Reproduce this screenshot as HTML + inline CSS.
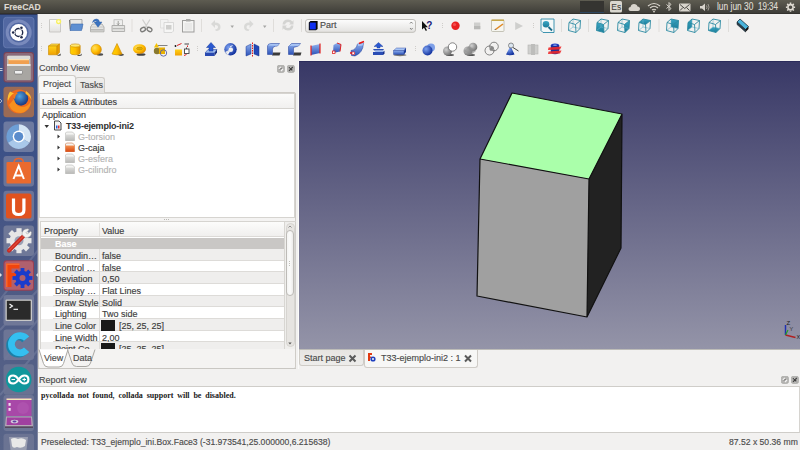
<!DOCTYPE html>
<html><head><meta charset="utf-8">
<style>
*{box-sizing:border-box;margin:0;padding:0}
html,body{width:800px;height:450px;overflow:hidden;background:#f2f1f0;font-family:"Liberation Sans",sans-serif;position:relative}
.a{position:absolute}
.t{position:absolute;white-space:nowrap;color:#3c3c3c;font-size:9px;line-height:11px;-webkit-text-stroke:0.15px currentColor}
#panel{left:0;top:0;width:800px;height:14px;background:linear-gradient(#5e5c51,#3f3e39 92%,#33322e 93%);}
#launcher{left:0;top:14px;width:38px;height:436px;background:linear-gradient(#3a548e,#3d5186 35%,#4e5a84 60%,#586488);border-right:1px solid #6a7090}
#vp{left:299px;top:61px;width:501px;height:288px;background:linear-gradient(#383866,#9494a8);border-top:1px solid #2a2a5a}
.dbtn{position:absolute;width:7px;height:7px;border-radius:2px;background:#aaa9a7;border:1px solid #9a9997}
</style></head><body>
<div id="panel" class="a">
  <div class="t" style="left:4px;top:1px;font-size:8.6px;line-height:12px;font-weight:bold;color:#dfdbd2">FreeCAD</div>
  <div class="t" style="left:717px;top:1px;font-size:10px;line-height:12px;color:#dfdbd2;transform:scaleX(0.84);transform-origin:0 0">lun jun 30</div>
  <div class="t" style="left:758px;top:1px;font-size:10px;line-height:12px;color:#dfdbd2;transform:scaleX(0.8);transform-origin:0 0">19:34</div>
</div>
<svg class="a" style="left:0;top:0" width="800" height="14" viewBox="0 0 800 14">
 <rect x="580" y="1" width="24" height="12" fill="#353431"/>
 <rect x="580" y="12" width="24" height="1" fill="#2a5a90" opacity="0.5"/>
 <rect x="610" y="1" width="12" height="11.5" rx="1.5" fill="#dad7cf"/>
 <text x="611.3" y="10" font-family="Liberation Sans" font-size="8.5" fill="#3c3b37">Es</text>
 <path d="M630.5 11 Q628.5 11 628.5 9 Q628.5 7.2 630.5 7 Q631 4 634 4 Q637 4 637.5 6.5 Q640 6.5 640 9 Q640 11 638 11 Z" fill="#d8d4cc"/>
 <path d="M648 6 Q654 1 660 6" fill="none" stroke="#d8d4cc" stroke-width="1.2"/>
 <path d="M650 8 Q654 4.5 658 8" fill="none" stroke="#d8d4cc" stroke-width="1.2"/>
 <path d="M652 10 Q654 8.5 656 10" fill="none" stroke="#d8d4cc" stroke-width="1.2"/>
 <circle cx="654" cy="11.5" r="0.9" fill="#d8d4cc"/>
 <path d="M666.5 4.5 L671 8.5 L669 10.5 L669 2.5 L671 4.5 L666.5 8.5" fill="none" stroke="#d8d4cc" stroke-width="1"/>
 <rect x="679" y="3.5" width="11.5" height="8" rx="1" fill="#d8d4cc"/>
 <path d="M680 4.5 L684.7 8.5 L689.5 4.5 M680 10.5 L683 7.5 M689.5 10.5 L686.5 7.5" fill="none" stroke="#3d3c38" stroke-width="0.9"/>
 <path d="M700 6 H702 L705 3.5 V11 L702 8.5 H700 Z" fill="#d8d4cc"/>
 <path d="M706.5 5.5 Q707.5 7.2 706.5 9 M708 4 Q710 7.2 708 10.5" fill="none" stroke="#a8a49c" stroke-width="0.9"/>
 <g transform="translate(790.5 7.2)" fill="none" stroke="#dfdbd2">
  <circle r="2.6" stroke-width="1.6"/>
  <path d="M0 -4.6 V-3.2 M0 3.2 V4.6 M-4.6 0 H-3.2 M3.2 0 H4.6 M-3.3 -3.3 L-2.3 -2.3 M2.3 2.3 L3.3 3.3 M-3.3 3.3 L-2.3 2.3 M2.3 -2.3 L3.3 -3.3" stroke-width="1.6"/>
 </g>
</svg>
<div id="launcher" class="a"></div>
<svg class="a" style="left:0;top:14px" width="38" height="436" viewBox="0 14 38 436">
 <defs>
  <linearGradient id="tile" x1="0" y1="0" x2="0" y2="1"><stop offset="0" stop-color="#fff" stop-opacity="0.22"/><stop offset="1" stop-color="#fff" stop-opacity="0.08"/></linearGradient>
  <radialGradient id="ff" cx="0.4" cy="0.35" r="0.6"><stop offset="0" stop-color="#4fa3e0"/><stop offset="1" stop-color="#1d3f86"/></radialGradient>
 </defs>
 <!-- wallpaper streaks -->
 <path d="M0 300 L38 250 M0 330 L38 290 M4 360 L38 320 M0 395 L38 350" stroke="#8a93b0" stroke-width="2" opacity="0.35"/>
 <rect x="37" y="14" width="1" height="436" fill="#8d95ae" opacity="0.6"/>
 <!-- 1 ubuntu -->
 <rect x="0" y="14" width="37" height="1" fill="#2c3658"/>
 <rect x="3.5" y="17.3" width="30.5" height="30.5" rx="3" fill="#5268a2" stroke="#7488bc" stroke-width="0.6"/>
 <circle cx="18.7" cy="32.5" r="11.5" fill="none" stroke="#a8b4dc" stroke-width="3" opacity="0.45"/>
 <circle cx="18.7" cy="32.5" r="8.4" fill="#fff"/>
 <circle cx="18.7" cy="32.5" r="4" fill="none" stroke="#1e2848" stroke-width="1.4"/>
 <circle cx="21.45" cy="27.74" r="2.1" fill="#fff"/><circle cx="13.20" cy="32.50" r="2.1" fill="#fff"/><circle cx="21.45" cy="37.26" r="2.1" fill="#fff"/><circle cx="21.45" cy="27.74" r="1.3" fill="#1e2848"/><circle cx="13.20" cy="32.50" r="1.3" fill="#1e2848"/><circle cx="21.45" cy="37.26" r="1.3" fill="#1e2848"/>
 <!-- 2 files -->
 <rect x="3.5" y="52" width="30.5" height="30.5" rx="3" fill="#7c4456"/>
 <rect x="4.5" y="53" width="28.5" height="28.5" rx="2.5" fill="#8a6a7a"/>
 <rect x="7" y="55.5" width="23.5" height="24.5" rx="1.5" fill="#b9b7b3"/>
 <rect x="7.5" y="56" width="22.5" height="3" fill="#dcdad6"/>
 <rect x="8.5" y="59" width="20.5" height="5" fill="#f0a050"/>
 <rect x="8.5" y="59" width="20.5" height="1.2" fill="#fce0b0"/>
 <rect x="7" y="64" width="23.5" height="2" fill="#e8e6e2"/>
 <rect x="7" y="66" width="23.5" height="14" fill="#a8a6a2"/>
 <rect x="14.5" y="70.5" width="8" height="3.5" rx="1" fill="#f0f0f0" stroke="#6a6a6a" stroke-width="0.6"/>
 <path d="M0 68.5 H2.5 M0 70.5 H2.5" stroke="#e8e8e8" stroke-width="0.8"/>
 <!-- 3 firefox -->
 <rect x="3.5" y="86.7" width="30.5" height="30.5" rx="3" fill="#9b6b55"/>
 <circle cx="19" cy="101.5" r="12" fill="#ee6a1e"/>
 <circle cx="21" cy="98.5" r="7.2" fill="url(#ff)"/>
 <path d="M10 91.5 Q7 96 8 101 Q10 95 14 93.5Z" fill="#ffc030"/>
 <path d="M14 99 Q15 106 22 107 Q28 107 31 101 Q30 111 21 113 Q12 113 9 105Z" fill="#f7901e"/>
 <path d="M26 91 Q31 94 31.5 100 Q29 95 25.5 94Z" fill="#ffb830"/>
 <path d="M13 95 Q15 92 18 93 Q15 95 15 99 Q13 98 13 95Z" fill="#f07a1e"/>
 <path d="M0 99 L2 101 L0 103" fill="none" stroke="#ddd" stroke-width="0.7"/>
 <!-- 4 chromium -->
 <rect x="3.5" y="121.4" width="30.5" height="30.5" rx="3" fill="#6d7aa0"/>
 <path d="M18.7 136.6 L18.70 124.30 A12.3 12.3 0 0 1 29.35 142.75Z" fill="#d4e4f4"/><path d="M18.7 136.6 L8.05 142.75 A12.3 12.3 0 0 1 18.70 124.30Z" fill="#6d9fd6"/><path d="M18.7 136.6 L29.35 142.75 A12.3 12.3 0 0 1 8.05 142.75Z" fill="#a9c8ea"/>
 <circle cx="18.7" cy="136.6" r="6" fill="#fff"/>
 <circle cx="18.7" cy="136.6" r="4.6" fill="#5a8ccc"/>
 <!-- 5 software center -->
 <rect x="3.5" y="156.1" width="30.5" height="30.5" rx="3" fill="#6b7498"/>
 <path d="M14 163 Q14 158.5 18.7 158.5 Q23.4 158.5 23.4 163" fill="none" stroke="#e8642c" stroke-width="1.6"/>
 <rect x="6.5" y="162" width="24.5" height="21.5" rx="1" fill="#ea6a2e"/>
 <path d="M13.5 179 L18.7 166 L23.9 179 M14.8 175.5 H22.6" fill="none" stroke="#fff" stroke-width="2"/>
 <!-- 6 ubuntu one -->
 <rect x="3.5" y="190.8" width="30.5" height="30.5" rx="3" fill="#6b7498"/>
 <rect x="6" y="193.5" width="25.5" height="25" rx="2.5" fill="#e0521e"/>
 <path d="M13.5 198.5 V210 Q13.5 214.5 18.7 214.5 Q23.9 214.5 23.9 210 V198.5" fill="none" stroke="#fff" stroke-width="3.2"/>
 <!-- 7 settings -->
 <rect x="3.5" y="225.5" width="30.5" height="30.5" rx="3" fill="#6f7898"/>
 <g transform="translate(19 240.7)">
  <circle r="9.5" fill="#e6e6e6"/>
  <g fill="#e6e6e6">
   <rect x="-2.6" y="-12.5" width="5.2" height="5"/><rect x="-2.6" y="7.5" width="5.2" height="5"/><rect x="-12.5" y="-2.6" width="5" height="5.2"/><rect x="7.5" y="-2.6" width="5" height="5.2"/>
   <g transform="rotate(45)"><rect x="-2.6" y="-12.5" width="5.2" height="5"/><rect x="-2.6" y="7.5" width="5.2" height="5"/><rect x="-12.5" y="-2.6" width="5" height="5.2"/><rect x="7.5" y="-2.6" width="5" height="5.2"/></g>
  </g>
  <circle r="4.5" fill="#9aa0b4"/>
  <path d="M-10 10 L5 -5" stroke="#c82a22" stroke-width="4" stroke-linecap="round"/>
  <path d="M-10 10 L5 -5" stroke="#f05a40" stroke-width="1.2" stroke-linecap="round" opacity="0.7"/>
  <path d="M3 -6 Q3 -12 9 -12 L10 -11 L7 -8 L8.5 -6.5 L11.5 -9.5 L12.5 -8.5 Q12.5 -3 6.5 -3Z" fill="#f2f2f2" stroke="#9a9a9a" stroke-width="0.5"/>
 </g>
 <!-- 8 freecad -->
 <rect x="3.5" y="260.2" width="30.5" height="30.5" rx="3" fill="#9a3f52"/>
 <rect x="4.5" y="261.2" width="28.5" height="28.5" rx="2.5" fill="#b0606e"/>
 <path d="M6 263.5 H19.5 V268.5 H11.5 V273 H18 V277.5 H11.5 V287 H6 Z" fill="#f0440e"/>
 <path d="M6 263.5 H19.5 V265 H7.5 V287 H6Z" fill="#ff8040" opacity="0.6"/>
 <g transform="translate(22.5 278)">
  <circle r="7.2" fill="#1a3ccc"/>
  <g fill="#1a3ccc">
   <rect x="-1.9" y="-10" width="3.8" height="4"/><rect x="-1.9" y="6" width="3.8" height="4"/><rect x="-10" y="-1.9" width="4" height="3.8"/><rect x="6" y="-1.9" width="4" height="3.8"/>
   <g transform="rotate(45)"><rect x="-1.9" y="-10" width="3.8" height="4"/><rect x="-1.9" y="6" width="3.8" height="4"/><rect x="-10" y="-1.9" width="4" height="3.8"/><rect x="6" y="-1.9" width="4" height="3.8"/></g>
  </g>
  <circle r="3" fill="#b0606e"/>
 </g>
 <path d="M0 273 L2 275 L0 277 M38 273 L36 275 L38 277" fill="#e0e0e0"/>
 <!-- 9 terminal -->
 <rect x="3.5" y="294.9" width="30.5" height="30.5" rx="3" fill="#707898"/>
 <rect x="5.5" y="299.5" width="26.5" height="21.5" rx="1" fill="#c8c8c8"/>
 <rect x="6.8" y="300.8" width="23.9" height="18.9" fill="#2a2a2a"/>
 <path d="M9.5 304 L12.5 306 L9.5 308" fill="none" stroke="#fff" stroke-width="1.1"/>
 <path d="M13.5 309.3 H18" stroke="#fff" stroke-width="1.1"/>
 <!-- 10 C -->
 <rect x="3.5" y="329.6" width="30.5" height="30.5" rx="3" fill="#707898" opacity="0.9"/>
 <path d="M27.39 337.79 A12 12 0 1 0 27.39 353.21 L22.18 348.84 A5.2 5.2 0 1 1 22.18 342.16Z" fill="#1c80a8"/>
 <path d="M29.19 336.49 A12 12 0 1 0 29.19 351.91 L23.98 347.54 A5.2 5.2 0 1 1 23.98 340.86Z" fill="#34bff0"/>
 <!-- 11 arduino -->
 <rect x="3.5" y="364.3" width="30.5" height="30.5" rx="3" fill="#6c7494" opacity="0.9"/>
 <circle cx="18.7" cy="379.5" r="12.8" fill="#10979c"/>
 <path d="M13.2 375.5 Q9 375.5 9 379.5 Q9 383.5 13.2 383.5 Q16 383.5 18.7 379.5 Q21.4 375.5 24.2 375.5 Q28.4 375.5 28.4 379.5 Q28.4 383.5 24.2 383.5 Q21.4 383.5 18.7 379.5 Q16 375.5 13.2 375.5Z" fill="none" stroke="#fff" stroke-width="2.2"/>
 <path d="M11.5 379.5 H15 M22.5 379.5 H26 M24.25 377.75 V381.25" stroke="#fff" stroke-width="1"/>
 <!-- 12 workspaces -->
 <rect x="3.5" y="395" width="30.5" height="36" rx="3" fill="#737a98" opacity="0.8"/>
 <rect x="6.5" y="398.5" width="25" height="17.5" fill="#a848a8"/>
 <rect x="6.5" y="398.5" width="25" height="1.5" fill="#f0e8b8"/>
 <circle cx="23" cy="408" r="6" fill="#c070c0" opacity="0.25"/>
 <rect x="8.5" y="403" width="2.2" height="2.8" fill="#f0e0f0"/><rect x="8.5" y="408" width="2.2" height="2.8" fill="#f0e0f0"/>
 <path d="M6 416.5 H32 L33 426.5 H5 Z" fill="#b8a8b8"/>
 <path d="M7 417.5 H31 L31.5 425 H6.5 Z" fill="#a040a0"/>
 <ellipse cx="14.5" cy="421.5" rx="3.8" ry="1.8" fill="#d8d0e0"/>
 <ellipse cx="14.5" cy="421.5" rx="2" ry="0.9" fill="#6040a0"/>
 <rect x="5" y="426.5" width="28" height="1.3" fill="#504050"/>
 <!-- 13 trash -->
 <rect x="3.5" y="433.7" width="30.5" height="20" rx="3" fill="#737a98" opacity="0.7"/>
 <path d="M9 437 H28 L26.5 450 H10.5Z" fill="#c8c8d0" opacity="0.5"/>
 <path d="M11 439 Q14 437 18 439 Q22 437 26 440 L25 446 Q21 449 17 447 Q13 449 12 446Z" fill="#e8e8e8"/>
</svg>
<!-- combo view header -->
<div class="t" style="left:39px;top:63px;color:#4c4c4c">Combo View</div>
<svg class="a" style="left:277px;top:65px" width="8" height="8" viewBox="0 0 8 8"><rect x="0.3" y="0.3" width="7.2" height="7.2" rx="1.8" fill="#b4b3b1" stroke="#a3a2a0" stroke-width="0.6"/><path d="M1.8 3.8 L3.8 1.8 M4 6 L6 4" stroke="#f4f4f4" stroke-width="1.1"/><path d="M3 4.6 L4.6 3" stroke="#555" stroke-width="0.9"/></svg>
<svg class="a" style="left:287px;top:65px" width="8" height="8" viewBox="0 0 8 8"><rect x="0.3" y="0.3" width="7.2" height="7.2" rx="1.8" fill="#b4b3b1" stroke="#a3a2a0" stroke-width="0.6"/><path d="M2 2 L5.8 5.8 M5.8 2 L2 5.8" stroke="#3e3e3e" stroke-width="1.1"/><path d="M2.2 1.4 L3.9 3.1 M6.4 4.7 L4.7 6.4" stroke="#eee" stroke-width="0.6"/></svg>
<!-- tabs -->
<div class="a" style="left:38px;top:92px;width:258px;height:277px;border:1px solid #cfccc7;border-radius:2px;background:#f4f3f2"></div>
<div class="a" style="left:75px;top:77px;width:30px;height:16px;border:1px solid #cfccc7;border-bottom:none;border-radius:3px 3px 0 0;background:linear-gradient(#efeeec,#e3e1de)"></div>
<div class="a" style="left:38px;top:75px;width:38px;height:18px;border:1px solid #cfccc7;border-bottom:none;border-radius:3px 3px 0 0;background:#f7f7f6"></div>
<div class="t" style="left:43px;top:79px;color:#4a4a4a">Project</div>
<div class="t" style="left:80px;top:80px;color:#4a4a4a">Tasks</div>
<!-- tree -->
<div class="a" style="left:39px;top:93px;width:256px;height:125px;background:#fff;border:1px solid #d6d4d0"></div>
<div class="a" style="left:40px;top:94px;width:254px;height:15px;background:linear-gradient(#fbfbfa,#f1f0ef);border-bottom:1px solid #d5d3cf"></div>
<div class="t" style="left:42px;top:97px">Labels &amp; Attributes</div>
<div class="t" style="left:42px;top:110px">Application</div>
<div class="t" style="left:66px;top:121px;font-weight:bold;color:#2e2e2e;letter-spacing:-0.2px;-webkit-text-stroke:0">T33-ejemplo-ini2</div>
<div class="t" style="left:78px;top:132px;color:#b4b4b4">G-torsion</div>
<div class="t" style="left:78px;top:143px;color:#3a3a3a">G-caja</div>
<div class="t" style="left:78px;top:154px;color:#b4b4b4">G-esfera</div>
<div class="t" style="left:78px;top:165px;color:#b4b4b4">G-cilindro</div>
<!-- splitter grip -->
<div class="a" style="left:164px;top:219px;width:6px;height:1px;background:repeating-linear-gradient(90deg,#b9b7b3 0 1px,transparent 1px 2px)"></div>
<!-- property table -->
<div class="a" style="left:40px;top:221px;width:256px;height:128px;background:#fff;border:1px solid #d6d4d0;border-right:none"></div>
<div class="a" style="left:41px;top:222px;width:243px;height:15px;background:linear-gradient(#fcfcfb,#f0efee);border-bottom:1px solid #dcdad7"></div>
<div class="a" style="left:99px;top:223px;width:1px;height:13px;background:#e2e0dd"></div>
<div class="t" style="left:44px;top:226px">Property</div>
<div class="t" style="left:102px;top:226px">Value</div>
<div id="rows" class="a" style="left:0;top:0;width:800px;height:349px;clip-path:inset(237px 0 0 0)"><div class="a" style="left:41px;top:238px;width:243px;height:11px;background:#c9c7c5"></div>
<div class="t" style="left:55px;top:239px;font-weight:bold;color:#fff">Base</div>
<div class="a" style="left:41px;top:249px;width:243px;height:12px;background:#efeeed"></div>
<div class="a" style="left:53px;top:260px;width:231px;height:1px;background:#dddbd8"></div>
<div class="a" style="left:99px;top:249px;width:1px;height:12px;background:#dddbd8"></div>
<div class="t" style="left:55px;top:251px">Boundin…</div>
<div class="t" style="left:102px;top:251px">false</div>
<div class="a" style="left:41px;top:261px;width:243px;height:11px;background:#ffffff"></div>
<div class="a" style="left:53px;top:271px;width:231px;height:1px;background:#dddbd8"></div>
<div class="a" style="left:99px;top:261px;width:1px;height:11px;background:#dddbd8"></div>
<div class="t" style="left:55px;top:263px">Control …</div>
<div class="t" style="left:102px;top:263px">false</div>
<div class="a" style="left:41px;top:272px;width:243px;height:12px;background:#efeeed"></div>
<div class="a" style="left:53px;top:283px;width:231px;height:1px;background:#dddbd8"></div>
<div class="a" style="left:99px;top:272px;width:1px;height:12px;background:#dddbd8"></div>
<div class="t" style="left:55px;top:274px">Deviation</div>
<div class="t" style="left:102px;top:274px">0,50</div>
<div class="a" style="left:41px;top:284px;width:243px;height:12px;background:#ffffff"></div>
<div class="a" style="left:53px;top:295px;width:231px;height:1px;background:#dddbd8"></div>
<div class="a" style="left:99px;top:284px;width:1px;height:12px;background:#dddbd8"></div>
<div class="t" style="left:55px;top:286px">Display …</div>
<div class="t" style="left:102px;top:286px">Flat Lines</div>
<div class="a" style="left:41px;top:296px;width:243px;height:11px;background:#efeeed"></div>
<div class="a" style="left:53px;top:306px;width:231px;height:1px;background:#dddbd8"></div>
<div class="a" style="left:99px;top:296px;width:1px;height:11px;background:#dddbd8"></div>
<div class="t" style="left:55px;top:298px">Draw Style</div>
<div class="t" style="left:102px;top:298px">Solid</div>
<div class="a" style="left:41px;top:307px;width:243px;height:12px;background:#ffffff"></div>
<div class="a" style="left:53px;top:318px;width:231px;height:1px;background:#dddbd8"></div>
<div class="a" style="left:99px;top:307px;width:1px;height:12px;background:#dddbd8"></div>
<div class="t" style="left:55px;top:309px">Lighting</div>
<div class="t" style="left:102px;top:309px">Two side</div>
<div class="a" style="left:41px;top:319px;width:243px;height:12px;background:#efeeed"></div>
<div class="a" style="left:53px;top:330px;width:231px;height:1px;background:#dddbd8"></div>
<div class="a" style="left:99px;top:319px;width:1px;height:12px;background:#dddbd8"></div>
<div class="t" style="left:55px;top:321px">Line Color</div>
<div class="a" style="left:101px;top:320px;width:14px;height:11px;background:#191919"></div>
<div class="t" style="left:119px;top:321px">[25, 25, 25]</div>
<div class="a" style="left:41px;top:331px;width:243px;height:11px;background:#ffffff"></div>
<div class="a" style="left:53px;top:341px;width:231px;height:1px;background:#dddbd8"></div>
<div class="a" style="left:99px;top:331px;width:1px;height:11px;background:#dddbd8"></div>
<div class="t" style="left:55px;top:333px">Line Width</div>
<div class="t" style="left:102px;top:333px">2,00</div>
<div class="a" style="left:41px;top:342px;width:243px;height:12px;background:#efeeed"></div>
<div class="a" style="left:53px;top:353px;width:231px;height:1px;background:#dddbd8"></div>
<div class="a" style="left:99px;top:342px;width:1px;height:12px;background:#dddbd8"></div>
<div class="t" style="left:55px;top:344px">Point Co…</div>
<div class="a" style="left:101px;top:343px;width:14px;height:11px;background:#191919"></div>
<div class="t" style="left:119px;top:344px">[25, 25, 25]</div></div>
<!-- scrollbar -->
<div class="a" style="left:284px;top:222px;width:12px;height:127px;background:#efeeec;border-left:1px solid #d8d6d2;border-right:1px solid #cfcdc9"></div>
<div class="a" style="left:285.5px;top:223px;width:9px;height:124px;border:1px solid #d6d4d0;border-radius:4.5px;background:#e6e4e1"></div>
<div class="a" style="left:286px;top:230px;width:8px;height:66px;border:1px solid #bdbbb7;border-radius:4px;background:linear-gradient(90deg,#f4f4f3,#fbfbfa,#ecebea)"></div>
<svg class="a" style="left:284px;top:222px" width="12" height="127" viewBox="284 222 12 127">
 <path d="M288.5 227.5 L290 226 L291.5 227.5" fill="none" stroke="#7a7a78" stroke-width="0.8"/>
 <path d="M288.3 342.5 H291.7 L290 344.5Z" fill="#5a5a58"/>
 <path d="M289.5 261 V262 M289.5 263 V264 M289.5 265 V266" stroke="#b0aeaa" stroke-width="0.8"/>
</svg>
<!-- View / Data tabs -->
<svg class="a" style="left:38px;top:348px" width="62" height="22" viewBox="38 348 62 22">
 <path d="M39 349.5 L43.5 363.5 Q44.5 367 48 367 L59 367 Q62.5 367 63.5 363.5 L68 349.5" fill="#fff" stroke="#a9a7a3" stroke-width="1"/>
 <path d="M67.5 349.5 L72 363 Q73 366.5 76.5 366.5 L86 366.5 Q89.5 366.5 90.5 363 L95 349.5" fill="none" stroke="#a9a7a3" stroke-width="1"/>
</svg>
<div class="t" style="left:44px;top:353px;color:#4a4a4a">View</div>
<div class="t" style="left:73px;top:353px;color:#4a4a4a">Data</div>
<div class="a" style="left:38px;top:368px;width:258px;height:1px;background:#c9c7c3"></div>

<!-- splitter lines -->
<div class="a" style="left:298px;top:61px;width:1px;height:308px;background:#fbfbfa"></div>

<!-- 3d view -->
<div id="vp" class="a"></div>
<!-- doc tabs -->
<div class="a" style="left:299px;top:349px;width:501px;height:1px;background:#bdbcb8"></div>
<div class="a" style="left:299px;top:350px;width:65px;height:16px;border:1px solid #cfccc7;border-top:none;border-radius:0 0 3px 3px;background:linear-gradient(#e6e4e1,#eeedeb)"></div>
<div class="a" style="left:364px;top:350px;width:114px;height:18px;border:1px solid #cfccc7;border-top:none;border-radius:0 0 3px 3px;background:#f7f7f6"></div>
<div class="t" style="left:304px;top:353px;color:#4a4a4a">Start page</div>
<div class="t" style="left:381px;top:353px;color:#4a4a4a">T33-ejemplo-ini2 : 1</div>

<!-- report view -->
<div class="t" style="left:39px;top:375px;color:#4c4c4c">Report view</div>
<svg class="a" style="left:781px;top:376px" width="8" height="8" viewBox="0 0 8 8"><rect x="0.3" y="0.3" width="7.2" height="7.2" rx="1.8" fill="#b4b3b1" stroke="#a3a2a0" stroke-width="0.6"/><path d="M1.8 3.8 L3.8 1.8 M4 6 L6 4" stroke="#f4f4f4" stroke-width="1.1"/><path d="M3 4.6 L4.6 3" stroke="#555" stroke-width="0.9"/></svg>
<svg class="a" style="left:791px;top:376px" width="8" height="8" viewBox="0 0 8 8"><rect x="0.3" y="0.3" width="7.2" height="7.2" rx="1.8" fill="#b4b3b1" stroke="#a3a2a0" stroke-width="0.6"/><path d="M2 2 L5.8 5.8 M5.8 2 L2 5.8" stroke="#3e3e3e" stroke-width="1.1"/><path d="M2.2 1.4 L3.9 3.1 M6.4 4.7 L4.7 6.4" stroke="#eee" stroke-width="0.6"/></svg>
<div class="a" style="left:38px;top:386px;width:762px;height:47px;background:#fff;border-top:1px solid #cfcdc9;border-bottom:1px solid #cfcdc9;border-right:1px solid #d6d4d0"></div>
<div class="t" style="left:41px;top:390px;font-family:'Liberation Serif',serif;font-size:8px;font-weight:bold;word-spacing:1.8px;color:#1a1a1a;-webkit-text-stroke:0">pycollada not found, collada support will be disabled.</div>
<!-- status bar -->
<div class="t" style="left:41px;top:437px;font-size:8.6px;color:#4c4c4c">Preselected: T33_ejemplo_ini.Box.Face3 (-31.973541,25.000000,6.215638)</div>
<div class="t" style="left:729px;top:437px;font-size:8.6px;color:#4c4c4c">87.52 x 50.36 mm</div>
<svg class="a" style="left:299px;top:61px" width="501" height="288" viewBox="299 61 501 288">
 <path d="M512 93 L622 114 L589 179 L480 159Z" fill="#aaffaa"/>
 <path d="M480 159 L589 179 L587 317 L477 296Z" fill="#a0a0a0"/>
 <path d="M589 179 L622 114 L621 248 L587 317Z" fill="#222222"/>
 <path d="M512 93 L622 114 L621 248 L587 317 L477 296 L480 159Z M480 159 L589 179 L622 114 M589 179 L587 317" fill="none" stroke="#111" stroke-width="1.2" stroke-linejoin="round"/>
 <!-- axis -->
 <path d="M785.5 335 L795.5 337.5" stroke="#b02020" stroke-width="1.3"/>
 <path d="M785.5 335 V325" stroke="#2030b0" stroke-width="1.5"/>
 <path d="M785.5 335 L788 330" stroke="#20a020" stroke-width="1.1"/>
 <text x="786.5" y="325" font-family="Liberation Sans" font-size="6" fill="#222">Z</text>
 <text x="789.5" y="330.5" font-family="Liberation Sans" font-size="5.5" fill="#333">Y</text>
 <text x="796.5" y="338.5" font-family="Liberation Sans" font-size="5.5" fill="#222">X</text>
</svg>
<!-- tree icons -->
<svg class="a" style="left:40px;top:108px" width="60" height="70" viewBox="40 108 60 70">
 <path d="M44.5 125 H49 L46.7 128Z" fill="#333"/>
 <path d="M54.5 121 H59 L61 123 V130 H54.5Z" fill="#f4f4f4" stroke="#333" stroke-width="0.9"/>
 <rect x="56" y="125.5" width="1.5" height="3" fill="#2060e0"/><rect x="58" y="125.5" width="1.5" height="3" fill="#e03030"/>
 <g fill="#333">
  <path d="M57.5 134.5 V138.5 L60 136.5Z"/><path d="M57.5 145.5 V149.5 L60 147.5Z"/><path d="M57.5 156.5 V160.5 L60 158.5Z"/><path d="M57.5 167.5 V171.5 L60 169.5Z"/>
 </g>
 <defs><linearGradient id="fg" x1="0" y1="0" x2="0" y2="1"><stop offset="0" stop-color="#dcdcda"/><stop offset="1" stop-color="#b8b8b6"/></linearGradient><linearGradient id="fo" x1="0" y1="0" x2="0" y2="1"><stop offset="0" stop-color="#f49050"/><stop offset="1" stop-color="#d84810"/></linearGradient></defs>
 <path d="M65.5 133.0 L66.5 132.0 H72.5 L74.5 134.0 V140.5 H65.5Z" fill="#f4f4f2" stroke="#a8a8a6" stroke-width="0.5"/>
 <rect x="65.5" y="134.5" width="9" height="6.3" fill="url(#fg)"/>
 <path d="M65.5 144.0 L66.5 143.0 H72.5 L74.5 145.0 V151.5 H65.5Z" fill="#f4f4f2" stroke="#c05a20" stroke-width="0.5"/>
 <rect x="65.5" y="145.5" width="9" height="6.3" fill="url(#fo)"/>
 <path d="M65.5 155.0 L66.5 154.0 H72.5 L74.5 156.0 V162.5 H65.5Z" fill="#f4f4f2" stroke="#a8a8a6" stroke-width="0.5"/>
 <rect x="65.5" y="156.5" width="9" height="6.3" fill="url(#fg)"/>
 <path d="M65.5 166.0 L66.5 165.0 H72.5 L74.5 167.0 V173.5 H65.5Z" fill="#f4f4f2" stroke="#a8a8a6" stroke-width="0.5"/>
 <rect x="65.5" y="167.5" width="9" height="6.3" fill="url(#fg)"/>
</svg>
<!-- doc tab icons -->
<svg class="a" style="left:340px;top:350px" width="140" height="18" viewBox="340 350 140 18">
 <path d="M349.5 355.5 L355.5 361.5 M355.5 355.5 L349.5 361.5" stroke="#5a5a5a" stroke-width="2"/>
 <path d="M465 355.5 L471 361.5 M471 355.5 L465 361.5" stroke="#5a5a5a" stroke-width="2"/>
 <path d="M368 353 H372 V355 H370 V356.5 H371.5 V358 H370 V361 H368Z" fill="#e03a12"/>
 <circle cx="373" cy="359" r="2.6" fill="#1e40c0"/><circle cx="373" cy="359" r="1" fill="#f7f7f6"/>
</svg>
<svg class="a" style="left:38px;top:14px" width="762" height="47" viewBox="38 14 762 47">
 <defs>
  <linearGradient id="gy" x1="0" y1="0" x2="0" y2="1"><stop offset="0" stop-color="#ffd21a"/><stop offset="1" stop-color="#f0a000"/></linearGradient>
  <linearGradient id="gys" x1="0" y1="0" x2="1" y2="0"><stop offset="0" stop-color="#ffd000"/><stop offset="0.5" stop-color="#ffc000"/><stop offset="1" stop-color="#e09000"/></linearGradient>
  <radialGradient id="gsph" cx="0.35" cy="0.35" r="0.7"><stop offset="0" stop-color="#ffe060"/><stop offset="0.6" stop-color="#ffbc00"/><stop offset="1" stop-color="#e08a00"/></radialGradient>
  <linearGradient id="gb" x1="0" y1="0" x2="0" y2="1"><stop offset="0" stop-color="#8fb0ee"/><stop offset="1" stop-color="#2c52b8"/></linearGradient>
  <radialGradient id="gbs" cx="0.35" cy="0.35" r="0.7"><stop offset="0" stop-color="#7ea2f0"/><stop offset="1" stop-color="#0c2c9a"/></radialGradient>
  <radialGradient id="ggs" cx="0.35" cy="0.35" r="0.7"><stop offset="0" stop-color="#d0d0d0"/><stop offset="1" stop-color="#707070"/></radialGradient>
  <linearGradient id="gt" x1="0" y1="0" x2="0" y2="1"><stop offset="0" stop-color="#3aa6c4"/><stop offset="1" stop-color="#1b7d9a"/></linearGradient>
  <linearGradient id="gw" x1="0" y1="0" x2="0" y2="1"><stop offset="0" stop-color="#fdfdfd"/><stop offset="1" stop-color="#e3e2e0"/></linearGradient>
 </defs>
 <!-- handles row1 -->
 <g fill="#cfcdca">
  <rect x="41" y="23" width="1" height="1"/><rect x="41" y="25" width="1" height="1"/><rect x="41" y="27" width="1" height="1"/>
  <rect x="442" y="23" width="1" height="1"/><rect x="442" y="25" width="1" height="1"/><rect x="442" y="27" width="1" height="1"/>
  <rect x="533" y="23" width="1" height="1"/><rect x="533" y="25" width="1" height="1"/><rect x="533" y="27" width="1" height="1"/>
  <rect x="41" y="46" width="1" height="1"/><rect x="41" y="48" width="1" height="1"/><rect x="41" y="50" width="1" height="1"/>
  <rect x="197" y="46" width="1" height="1"/><rect x="197" y="48" width="1" height="1"/><rect x="197" y="50" width="1" height="1"/>
  <rect x="415" y="46" width="1" height="1"/><rect x="415" y="48" width="1" height="1"/><rect x="415" y="50" width="1" height="1"/>
 </g>
 <!-- separators -->
 <g fill="#dfddda">
  <rect x="131.5" y="19" width="1" height="13"/><rect x="201" y="19" width="1" height="13"/><rect x="273" y="19" width="1" height="13"/>
  <rect x="301" y="19" width="1" height="13"/><rect x="561" y="19" width="1" height="13"/><rect x="588" y="19" width="1" height="13"/>
  <rect x="658.5" y="19" width="1" height="13"/><rect x="728" y="19" width="1" height="13"/>
 </g>
 <!-- New -->
 <path d="M49.5 19.5 H60.5 V32 H49.5 Z" fill="url(#gw)" stroke="#c6c5c2" stroke-width="0.9"/>
 <circle cx="58.6" cy="21.6" r="2.6" fill="#f8f060"/><circle cx="58.6" cy="21.6" r="1.3" fill="#fffbd0"/>
 <!-- Open -->
 <path d="M70 19.5 H82 V29 H70 Z" fill="#e8e8e6" stroke="#9a9a98" stroke-width="0.8"/>
 <path d="M69.5 20 L70.5 30.5" stroke="#707070" stroke-width="1"/>
 <path d="M71.5 24 H83 L81.5 30.5 H70 Z" fill="#5d8fd2" stroke="#3e6cb0" stroke-width="0.6"/>
 <!-- Save -->
 <path d="M90.5 27 L92.5 24 H102 L104 27 V31.8 H90.5 Z" fill="#e4e4e2" stroke="#a4a4a2" stroke-width="0.8"/>
 <path d="M90.5 27 H104" stroke="#bdbdbb" stroke-width="0.7"/>
 <rect x="91" y="29.2" width="12.5" height="1.3" fill="#b0b0ae"/>
 <path d="M92.5 22.5 Q93 19 96.5 19 Q99 19 99.5 22 L102 22 L98 27.2 L94.2 22 L96.8 22 Q96.5 21 95.5 21 Q94 21 92.5 22.5Z" fill="#3a72c0" stroke="#2a5aa0" stroke-width="0.4"/>
 <!-- Print -->
 <rect x="114" y="19.8" width="8.5" height="6" fill="#efefee" stroke="#b0b0ae" stroke-width="0.7"/>
 <path d="M118.2 21 V24.5 M117 23.5 L118.2 24.8 L119.5 23.5" stroke="#8a8a88" stroke-width="0.8" fill="none"/>
 <path d="M112 25.5 H124.6 V31.5 H112 Z" fill="#e2e2e0" stroke="#a2a2a0" stroke-width="0.8"/>
 <rect x="112.5" y="28" width="11.5" height="1.2" fill="#b8b8b6"/>
 <!-- Cut -->
 <path d="M142.5 19.5 L147.5 27.5 M150 19.5 L145 27.5" stroke="#cfcfcd" stroke-width="1.3"/>
 <ellipse cx="143" cy="29.5" rx="2.6" ry="1.9" fill="none" stroke="#7c7c7a" stroke-width="1.3" transform="rotate(-30 143 29.5)"/>
 <ellipse cx="149.5" cy="29.5" rx="2.6" ry="1.9" fill="none" stroke="#7c7c7a" stroke-width="1.3" transform="rotate(30 149.5 29.5)"/>
 <!-- Copy -->
 <path d="M160.5 19.5 H168 V28 H160.5Z" fill="#f3f3f2" stroke="#dcdcda" stroke-width="0.8"/>
 <path d="M164 22.5 H173.5 V31 L172 32.5 H164Z" fill="#f6f6f5" stroke="#d2d2d0" stroke-width="0.8"/>
 <rect x="166" y="25" width="5.5" height="4.5" fill="#cfcfcd"/>
 <!-- Paste -->
 <rect x="182.5" y="20.5" width="11.5" height="11.5" fill="#f4f4f3" stroke="#9d9d9b" stroke-width="1"/>
 <rect x="186" y="19" width="4.5" height="2.5" fill="#a9a9a7"/>
 <rect x="184.5" y="23" width="7.5" height="7.5" fill="#e9e9e8"/>
 <!-- Undo -->
 <path d="M211 24 L215 20 V22.5 Q220.5 22.5 220.5 27 Q220.5 31 216 31 L215 29.5 Q218 29 218 27 Q218 25 215 25 V28 Z" fill="#d9d9d7"/>
 <path d="M230.5 25.5 H234 L232.2 28Z" fill="#a6a6a4"/>
 <!-- Redo -->
 <path d="M253.5 24 L249.5 20 V22.5 Q244 22.5 244 27 Q244 31 248.5 31 L249.5 29.5 Q246.5 29 246.5 27 Q246.5 25 249.5 25 V28 Z" fill="#d9d9d7"/>
 <path d="M263 25.5 H266.5 L264.7 28Z" fill="#a6a6a4"/>
 <!-- Refresh -->
 <path d="M282.5 24.5 Q283 19.5 288 19.5 Q291 19.5 292.5 21.5 L293.5 20 V24.5 H289 L290.5 23 Q289.5 22 288 22 Q285.5 22 285 24.5Z" fill="#d4d4d2"/>
 <path d="M293.5 25.5 Q293 30.5 288 30.5 Q285 30.5 283.5 28.5 L282.5 30 V25.5 H287 L285.5 27 Q286.5 28 288 28 Q290.5 28 291 25.5Z" fill="#d4d4d2"/>
 <!-- Combo box -->
 <rect x="305.5" y="19.5" width="110" height="12.8" rx="2.5" fill="url(#gw)" stroke="#c0beba" stroke-width="1"/>
 <path d="M308.8 22.5 L310.5 21 H317.6 V29 L316 30.2 H308.8Z" fill="#0a0a0a"/>
 <rect x="309.8" y="22.6" width="6" height="6.8" fill="#1030f0"/>
 <path d="M410 23.5 L411.3 22 L412.6 23.5 M410 28 L411.3 29.5 L412.6 28" fill="none" stroke="#6a6a68" stroke-width="0.8"/>
 <!-- whats this -->
 <path d="M422 21 V29.5 L424 27.8 L425.8 31 L427 30.3 L425.3 27.3 L428 27.2 Z" fill="#111"/>
 <text x="426.3" y="29" font-family="Liberation Sans" font-weight="bold" font-size="10" fill="#1c1c7a">?</text>
 <!-- record -->
 <circle cx="455.5" cy="25.7" r="4.2" fill="#e82020"/><circle cx="454.5" cy="24.5" r="1.6" fill="#f87070" opacity="0.6"/>
 <!-- stop -->
 <rect x="474" y="22.5" width="6.3" height="6.7" fill="#cfcfcd"/><rect x="474" y="26" width="6.3" height="3.2" fill="#b9b9b7"/>
 <!-- macro edit -->
 <rect x="491.5" y="20" width="12.5" height="11.5" rx="1" fill="#f6f6f0" stroke="#b9b6a8" stroke-width="0.8"/>
 <rect x="491.5" y="19.5" width="12.5" height="1.5" fill="#c8a84a"/>
 <path d="M495 29 L502.5 23.5 L503.5 24.5 L496 30Z" fill="#e08a28"/><path d="M494.5 30 L495 29 L496 30Z" fill="#333"/>
 <!-- play -->
 <path d="M515.2 22 L523 26 L515.2 30Z" fill="#cfcfcd"/>
 <!-- fit all -->
 <path d="M541 19 H554 V32.5 H543 L541 30.5Z" fill="#f4f8f8" stroke="#2a8aa8" stroke-width="0.9"/>
 <circle cx="546" cy="24.2" r="3.3" fill="url(#gt)"/>
 <path d="M548.5 27 L552 30.5" stroke="#1a6a88" stroke-width="1.8"/>
 <!-- view cubes -->
 <path d="M573.0 27.0 L573.0 19.0 M573.0 27.0 L568.5 30.5 M573.0 27.0 L580.0 28.5" stroke="#6cb4c8" stroke-width="0.6" fill="none"/><path d="M569.0 22.5 L573.0 19.0 L580.5 20.5 L580.0 28.5 L576.0 32.5 L568.5 30.5Z M569.0 22.5 L575.5 24.5 L580.5 20.5 M575.5 24.5 L576.0 32.5" stroke="#2b8aa2" stroke-width="0.9" fill="none" stroke-linejoin="round"/>
 <path d="M597.0 22.5 L603.5 24.5 L604.0 32.5 L596.5 30.5Z" fill="url(#gt)"/><path d="M601.0 27.0 L601.0 19.0 M601.0 27.0 L596.5 30.5 M601.0 27.0 L608.0 28.5" stroke="#6cb4c8" stroke-width="0.6" fill="none"/><path d="M597.0 22.5 L601.0 19.0 L608.5 20.5 L608.0 28.5 L604.0 32.5 L596.5 30.5Z M597.0 22.5 L603.5 24.5 L608.5 20.5 M603.5 24.5 L604.0 32.5" stroke="#2b8aa2" stroke-width="0.9" fill="none" stroke-linejoin="round"/>
 <path d="M624.5 24.5 L629.5 20.5 L629.0 28.5 L625.0 32.5Z" fill="url(#gt)"/><path d="M622.0 27.0 L622.0 19.0 M622.0 27.0 L617.5 30.5 M622.0 27.0 L629.0 28.5" stroke="#6cb4c8" stroke-width="0.6" fill="none"/><path d="M618.0 22.5 L622.0 19.0 L629.5 20.5 L629.0 28.5 L625.0 32.5 L617.5 30.5Z M618.0 22.5 L624.5 24.5 L629.5 20.5 M624.5 24.5 L625.0 32.5" stroke="#2b8aa2" stroke-width="0.9" fill="none" stroke-linejoin="round"/>
 <path d="M639.0 22.5 L643.0 19.0 L650.5 20.5 L645.5 24.5Z" fill="url(#gt)"/><path d="M643.0 27.0 L643.0 19.0 M643.0 27.0 L638.5 30.5 M643.0 27.0 L650.0 28.5" stroke="#6cb4c8" stroke-width="0.6" fill="none"/><path d="M639.0 22.5 L643.0 19.0 L650.5 20.5 L650.0 28.5 L646.0 32.5 L638.5 30.5Z M639.0 22.5 L645.5 24.5 L650.5 20.5 M645.5 24.5 L646.0 32.5" stroke="#2b8aa2" stroke-width="0.9" fill="none" stroke-linejoin="round"/>
 <path d="M671.0 19.0 L678.5 20.5 L678.0 28.5 L671.0 27.0Z" fill="url(#gt)"/><path d="M671.0 27.0 L671.0 19.0 M671.0 27.0 L666.5 30.5 M671.0 27.0 L678.0 28.5" stroke="#6cb4c8" stroke-width="0.6" fill="none"/><path d="M667.0 22.5 L671.0 19.0 L678.5 20.5 L678.0 28.5 L674.0 32.5 L666.5 30.5Z M667.0 22.5 L673.5 24.5 L678.5 20.5 M673.5 24.5 L674.0 32.5" stroke="#2b8aa2" stroke-width="0.9" fill="none" stroke-linejoin="round"/>
 <path d="M688.0 22.5 L692.0 19.0 L692.0 27.0 L687.5 30.5Z" fill="url(#gt)"/><path d="M692.0 27.0 L692.0 19.0 M692.0 27.0 L687.5 30.5 M692.0 27.0 L699.0 28.5" stroke="#6cb4c8" stroke-width="0.6" fill="none"/><path d="M688.0 22.5 L692.0 19.0 L699.5 20.5 L699.0 28.5 L695.0 32.5 L687.5 30.5Z M688.0 22.5 L694.5 24.5 L699.5 20.5 M694.5 24.5 L695.0 32.5" stroke="#2b8aa2" stroke-width="0.9" fill="none" stroke-linejoin="round"/>
 <path d="M708.5 30.5 L713.0 27.0 L720.0 28.5 L716.0 32.5Z" fill="url(#gt)"/><path d="M713.0 27.0 L713.0 19.0 M713.0 27.0 L708.5 30.5 M713.0 27.0 L720.0 28.5" stroke="#6cb4c8" stroke-width="0.6" fill="none"/><path d="M709.0 22.5 L713.0 19.0 L720.5 20.5 L720.0 28.5 L716.0 32.5 L708.5 30.5Z M709.0 22.5 L715.5 24.5 L720.5 20.5 M715.5 24.5 L716.0 32.5" stroke="#2b8aa2" stroke-width="0.9" fill="none" stroke-linejoin="round"/>
 <!-- measure -->
 <path d="M737 22 L740 19 L748.5 26.5 L745.5 29.5Z" fill="#4ab4dc" stroke="#1e3440" stroke-width="0.8" stroke-linejoin="round"/>
 <path d="M737 22 L745.5 29.5 V32 L737 24.5Z" fill="#2a3a44" stroke="#1e3440" stroke-width="0.6"/>
 <path d="M745.5 29.5 L748.5 26.5 V29 L745.5 32Z" fill="#111"/>

 <!-- ROW 2 -->
 <!-- box -->
 <path d="M58 55 L61 53.5 L60.5 55.8 L57 56Z" fill="#3a3a3a" opacity="0.8"/>
 <path d="M48.5 46 L51.5 44 H59.5 L57 46Z" fill="#ffe04a" stroke="#c88a00" stroke-width="0.6"/>
 <path d="M48.5 46 H57 V54.8 H48.5Z" fill="url(#gy)" stroke="#c88a00" stroke-width="0.6"/>
 <path d="M57 46 L59.5 44 V52.5 L57 54.8Z" fill="#e89c00" stroke="#c88a00" stroke-width="0.6"/>
 <!-- cylinder -->
 <path d="M78 55 Q81 55 82 53.5 L81.5 55.5 Q79 56.2 77 56Z" fill="#333" opacity="0.85"/>
 <path d="M70.3 45.5 V53 Q70.3 54.8 75.2 54.8 Q80.2 54.8 80.2 53 V45.5Z" fill="url(#gys)" stroke="#c88a00" stroke-width="0.6"/>
 <ellipse cx="75.2" cy="45.5" rx="4.9" ry="1.6" fill="#ffe870" stroke="#c88a00" stroke-width="0.6"/>
 <!-- sphere -->
 <ellipse cx="100" cy="54.5" rx="3.2" ry="1.2" fill="#333" opacity="0.85"/>
 <circle cx="96.2" cy="49.5" r="5.2" fill="url(#gsph)" stroke="#c88a00" stroke-width="0.5"/>
 <!-- cone -->
 <ellipse cx="121" cy="54.8" rx="3" ry="1.1" fill="#333" opacity="0.85"/>
 <path d="M117 43.5 L122 54 Q117 55.8 112 54Z" fill="url(#gys)" stroke="#c88a00" stroke-width="0.6" stroke-linejoin="round"/>
 <!-- torus -->
 <ellipse cx="141" cy="54.5" rx="4.5" ry="1.3" fill="#444"/>
 <ellipse cx="139.5" cy="49" rx="6.5" ry="4.8" fill="url(#gsph)"/>
 <ellipse cx="139.5" cy="48.5" rx="3" ry="1.4" fill="#e0ab00" stroke="#a07800" stroke-width="0.4"/>
 <!-- primitives -->
 <path d="M156.5 43 L159 47.5 H154Z" fill="#f4c000"/>
 <circle cx="157" cy="51" r="3.2" fill="#8a7a30"/>
 <rect x="159" y="47.5" width="6" height="6.5" fill="#e8b000"/>
 <circle cx="163.5" cy="53" r="3.2" fill="none" stroke="#5a62a0" stroke-width="0.9"/>
 <path d="M158 45.5 H167.5" stroke="#666" stroke-width="0.8"/>
 <!-- shape builder -->
 <rect x="175" y="49.5" width="7" height="6" fill="url(#gy)"/>
 <path d="M184.5 44 H189 M186.5 47.5 V49" stroke="#333" stroke-width="0.9"/>
 <rect x="184.5" y="49" width="4.5" height="4.5" fill="#fff" stroke="#444" stroke-width="0.9"/>
 <path d="M177 45.5 L181.5 43.5 M187.5 45.5 V47 M184 55.5 L186.5 54.5" stroke="#e02020" stroke-width="1"/>
 <circle cx="175.5" cy="46" r="0.9" fill="#111"/>
 <!-- extrude -->
 <path d="M205 53 L208 49.5 H217 L214.5 53Z" fill="#9ab8ee" stroke="#1d3c9a" stroke-width="0.5"/>
 <path d="M205 53 H214.5 V56 H205Z" fill="#2848b0"/>
 <path d="M214.5 53 L217 49.5 V52.5 L214.5 56Z" fill="#1a3080"/>
 <path d="M209 51 H213 V47.5 H215.5 L211 42.5 L206.5 47.5 H209Z" fill="#2a58d0" stroke="#163a9a" stroke-width="0.5"/>
 <!-- revolve -->
 <circle cx="230.5" cy="49.3" r="6.2" fill="url(#gbs)"/>
 <circle cx="230.8" cy="49.8" r="2.3" fill="#f2f1f0"/>
 <path d="M225 52 L230.5 49.3 L228 55.5Z" fill="#f2f1f0" opacity="0.9"/>
 <path d="M230 47 L232.5 45.5 M229.5 52 L227 53.5" stroke="#fff" stroke-width="0.9"/>
 <!-- mirror -->
 <path d="M246 46.5 L251 44 V54 L246 56Z" fill="url(#gb)" stroke="#1c3a98" stroke-width="0.5"/>
 <path d="M254 44 L259 46.5 V56 L254 54Z" fill="#2448b8" stroke="#12308a" stroke-width="0.5"/>
 <path d="M252.5 42.5 V56.5" stroke="#e81818" stroke-width="1" stroke-dasharray="1.6 0.9"/>
 <!-- fillet -->
 <path d="M273 52.5 H280.5 L279.5 55.5 H272Z" fill="#3a3a3a"/>
 <path d="M267.5 46 Q268 43.5 271 43.5 H279.5 L277.5 46 Q272.5 46 272.5 49.5 V54.5 H267.5Z" fill="url(#gb)" stroke="#1c3a98" stroke-width="0.5"/>
 <path d="M268 45.5 Q269 44 271 44 H279 L277.5 45.8Z" fill="#a8c4f4"/>
 <!-- chamfer -->
 <path d="M294 52.5 H301.5 L300.5 55.5 H293Z" fill="#3a3a3a"/>
 <path d="M288.5 46.5 L291.5 43.5 H300.5 L298.5 46 L293.5 47.5 V54.5 H288.5Z" fill="url(#gb)" stroke="#1c3a98" stroke-width="0.5"/>
 <path d="M289 46 L291.7 44 H300 L298.5 45.8Z" fill="#a8c4f4"/>
 <!-- ruled -->
 <path d="M311 46 L320 44 V53 L311 55Z" fill="url(#gb)"/>
 <path d="M311 45.5 V55.5 M320 43.5 V53.5" stroke="#e02020" stroke-width="1.2"/>
 <!-- loft -->
 <path d="M333.5 45 L337 43 L341 44.5 L340 51.5 L333 53Z" fill="url(#gb)"/>
 <path d="M337 43 L341 44.5 L340 51.5" stroke="#e02020" stroke-width="1" fill="none"/>
 <rect x="332.5" y="51" width="2.5" height="2.5" fill="#fff" stroke="#e02020" stroke-width="0.8"/>
 <!-- sweep -->
 <path d="M351 50.5 Q356 50 357.5 44 L363.5 43 Q363 53 355 56 L351.5 55.5Z" fill="url(#gb)" stroke="#1c3a98" stroke-width="0.5"/>
 <path d="M357.5 44 L363.5 43 L362.5 45.5 L358 46Z" fill="#a8c4f4"/>
 <path d="M350 53 H354.5 M359 43.5 L364 41.5" stroke="#e81818" stroke-width="1.4"/>
 <rect x="352" y="52" width="2.6" height="2.6" fill="#fff" stroke="#e81818" stroke-width="0.6"/>
 <!-- offset -->
 <path d="M378.5 42.5 L383 46.5 H380 V48 H377 V46.5 H374Z" fill="#2a58d0" stroke="#163a9a" stroke-width="0.4"/>
 <path d="M373 49 H384 L383 50.5 H374Z" fill="#2a50b8"/>
 <path d="M374.5 52 L376 50.8 H384.5 L383 52Z" fill="#9ab8ee"/>
 <path d="M373 52 H383 V55 H373Z" fill="#2a4cb4"/>
 <path d="M383 52 L384.5 50.8 V53.8 L383 55Z" fill="#16308a"/>
 <!-- thickness -->
 <ellipse cx="400" cy="55" rx="6.5" ry="1.2" fill="#444" opacity="0.7"/>
 <path d="M393.5 50.5 L396.5 48 H406 L404 50.5Z" fill="#a8c4f4" stroke="#1c3a98" stroke-width="0.4"/>
 <path d="M393.5 50.5 H404 V54.5 H393.5Z" fill="url(#gb)" stroke="#1c3a98" stroke-width="0.4"/>
 <path d="M404 50.5 L406 48 V52 L404 54.5Z" fill="#1c3a98"/>
 <!-- boolean -->
 <circle cx="431" cy="47.5" r="4" fill="#7ea0e8"/>
 <circle cx="427.5" cy="50.5" r="5" fill="url(#gbs)"/>
 <!-- cut -->
 <ellipse cx="450" cy="55" rx="4" ry="1" fill="#555"/>
 <circle cx="447.5" cy="51" r="4.5" fill="url(#ggs)"/>
 <circle cx="452.5" cy="47" r="4.2" fill="#fff" stroke="#555" stroke-width="0.7"/>
 <!-- fuse -->
 <ellipse cx="471" cy="55" rx="4" ry="1" fill="#555"/>
 <circle cx="468" cy="51" r="4.5" fill="url(#ggs)"/>
 <circle cx="473" cy="47" r="4.3" fill="url(#ggs)"/>
 <path d="M464 51 L469 46 L476 51 L471 55Z" fill="#8a8a8a" opacity="0.6"/>
 <!-- common -->
 <circle cx="489.5" cy="50.5" r="4.5" fill="none" stroke="#555" stroke-width="0.7"/>
 <circle cx="494" cy="46.5" r="4.3" fill="none" stroke="#555" stroke-width="0.7"/>
 <ellipse cx="491.7" cy="48.5" rx="1.8" ry="2.5" fill="#888" transform="rotate(45 491.7 48.5)"/>
 <!-- cross sections -->
 <path d="M510.5 46 L514.5 54.5 Q510 56 506 54.5Z" fill="url(#gbs)"/>
 <circle cx="511" cy="45.5" r="2.5" fill="#dce6f0" stroke="#666" stroke-width="0.7"/>
 <path d="M513 47.5 L518.5 51" stroke="#333" stroke-width="0.9"/>
 <!-- compound (grey) -->
 <rect x="528" y="45" width="10" height="9" fill="#cfcfcd" stroke="#b4b4b2" stroke-width="0.6"/>
 <rect x="531" y="44" width="4" height="11" fill="#bdbdbb"/>
 <!-- check geometry -->
 <ellipse cx="555" cy="45.5" rx="4.2" ry="2" fill="#2240c0"/>
 <path d="M550.8 45.5 V53 Q555 55.5 559.2 53 V45.5Z" fill="#1a2f9a"/>
 <path d="M548.5 47.5 L561.5 46.5 L560 49.5 L548 50Z M548.5 51.5 L561.5 50.5 L560 53.5 L548 54Z" fill="#ee2828" opacity="0.9"/>
 <ellipse cx="555" cy="45.3" rx="2" ry="0.7" fill="#7a9af0"/>
</svg>
<div class="t" style="left:320px;top:20px;color:#4a4a4a">Part</div>
</body></html>
